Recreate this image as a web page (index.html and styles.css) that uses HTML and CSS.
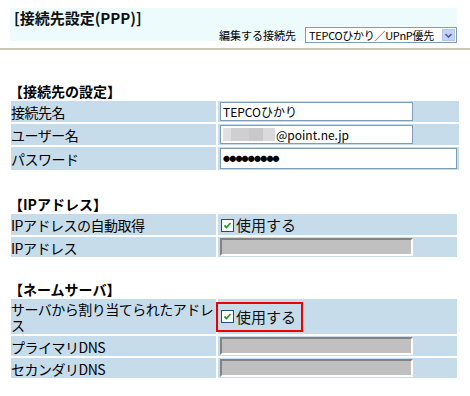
FILE: index.html
```html
<!DOCTYPE html>
<html lang="ja">
<head>
    <meta charset="UTF-8">
    <title>接続先設定(PPP)</title>
    <link rel="stylesheet" href="styles.css">
</head>
<body>
    <div class="title-band">
        <h1 class="page-title">[接続先設定(PPP)]</h1>
        <div class="edit-target">
            <span>編集する接続先</span>
            <div class="select-box">
                <span class="select-text">TEPCOひかり／UPnP優先</span>
                <span class="select-arrow">
                    <svg width="11" height="11" viewBox="0 0 11 11"><path d="M2.5 4 L5.5 7 L8.5 4" fill="none" stroke="#4d6185" stroke-width="1.6"/></svg>
                </span>
            </div>
        </div>
    </div>
    <div class="divider"></div>

    <section class="group first">
        <h2 class="group-title">【接続先の設定】</h2>
        <div class="form-table">
            <div class="label">接続先名</div>
            <div class="value"><div class="text-input">TEPCOひかり</div></div>

            <div class="label">ユーザー名</div>
            <div class="value"><div class="text-input"><span class="blur"></span>@point.ne.jp</div></div>

            <div class="label">パスワード</div>
            <div class="value"><div class="text-input wide dots">●●●●●●●●●</div></div>
        </div>
    </section>

    <section class="group">
        <h2 class="group-title">【IPアドレス】</h2>
        <div class="form-table">
            <div class="label">IPアドレスの自動取得</div>
            <div class="value"><label class="check"><span class="box">
                <svg width="9" height="9" viewBox="0 0 9 9"><path d="M1.5 4.5 L3.5 6.5 L7.5 2" fill="none" stroke="#21a121" stroke-width="1.8"/></svg>
            </span>使用する</label></div>

            <div class="label">IPアドレス</div>
            <div class="value"><div class="text-input disabled"></div></div>
        </div>
    </section>

    <section class="group dns">
        <h2 class="group-title">【ネームサーバ】</h2>
        <div class="form-table">
            <div class="label tall">サーバから割り当てられたアドレス</div>
            <div class="value"><label class="check marked"><span class="box">
                <svg width="9" height="9" viewBox="0 0 9 9"><path d="M1.5 4.5 L3.5 6.5 L7.5 2" fill="none" stroke="#21a121" stroke-width="1.8"/></svg>
            </span>使用する</label></div>

            <div class="label">プライマリDNS</div>
            <div class="value"><div class="text-input disabled"></div></div>

            <div class="label">セカンダリDNS</div>
            <div class="value"><div class="text-input disabled"></div></div>
        </div>
    </section>
</body>
</html>
```

FILE: styles.css
```css
* {
    margin: 0;
    padding: 0;
    box-sizing: border-box;
}

body {
    font-family: "Noto Sans CJK JP", "Liberation Sans", sans-serif;
    font-size: 14px;
    color: #000;
    background: #fff;
}

.title-band {
    margin: 8px 13px 0 10px;
    height: 33px;
    background-color: #edfbfd;
    padding-left: 4px;
}

.page-title {
    font-size: 15px;
    font-weight: bold;
    line-height: 18px;
    padding-top: 1px;
    color: #111;
}

.edit-target {
    display: flex;
    justify-content: flex-end;
    align-items: center;
    gap: 9px;
    font-size: 11px;
    line-height: 14px;
}

.select-box {
    display: flex;
    align-items: center;
    width: 152px;
    height: 16px;
    border: 1px solid #7f9db9;
    background: #fff;
    font-size: 11px;
    letter-spacing: -0.3px;
    padding-left: 3px;
    padding-right: 1px;
}

.select-text {
    flex: 1;
    white-space: nowrap;
}

.select-arrow {
    display: flex;
    align-items: center;
    justify-content: center;
    width: 13px;
    height: 12px;
    background: #c3d3fd;
    border: 1px solid #b3c4f0;
}

.divider {
    margin-top: 7px;
    height: 2px;
    background-color: #cbc6b3;
}

.group {
    margin: 0 13px 0 11px;
    padding-top: 26px;
}

.group.first {
    padding-top: 33px;
}

.group.dns {
    padding-top: 24px;
}

.group-title {
    font-size: 14px;
    font-weight: bold;
    line-height: 17px;
    margin-bottom: 1px;
    margin-left: -2px;
}

.form-table {
    display: grid;
    grid-template-columns: 205px 1fr;
    gap: 2px;
}

.label,
.value {
    background-color: #c7dcea;
    min-height: 20px;
    display: flex;
    align-items: center;
}

.label {
    font-size: 14px;
    line-height: 16px;
    padding: 2px 0 1px 0;
    letter-spacing: -0.5px;
}

.label.tall {
    min-height: 33px;
}

.value {
    padding: 1px 2px;
}

.text-input {
    width: 193px;
    height: 19px;
    border: 1px solid #7f9db9;
    background: #fff;
    font-size: 12px;
    line-height: 17px;
    padding-left: 2px;
    display: flex;
    align-items: center;
}

.text-input.wide {
    width: 237px;
    height: 21px;
}

.text-input.dots {
    font-size: 7px;
    letter-spacing: -0.8px;
}

.text-input.disabled {
    background: #c0c0c0;
    border: 2px solid;
    border-color: #838383 #fff #fff #838383;
    height: 18px;
}

.blur {
    display: inline-block;
    width: 52px;
    height: 13px;
    background: linear-gradient(90deg, #e0e0e0 0 8px, #cfcfcf 8px 26px, #c8c8c8 26px 40px, #dadada 40px);
    margin-right: 1px;
}

.check {
    display: inline-flex;
    align-items: center;
    font-size: 15px;
    line-height: 18px;
    color: #111;
    padding: 1px 2px 0 1px;
}

.check .box {
    display: flex;
    align-items: center;
    justify-content: center;
    width: 13px;
    height: 13px;
    border: 1px solid #1c5180;
    background: #fff;
    margin-right: 2px;
}

.check.marked {
    border: 2px solid #ee0000;
    padding: 4px 5px 4px 3px;
    margin-left: -4px;
}
```
